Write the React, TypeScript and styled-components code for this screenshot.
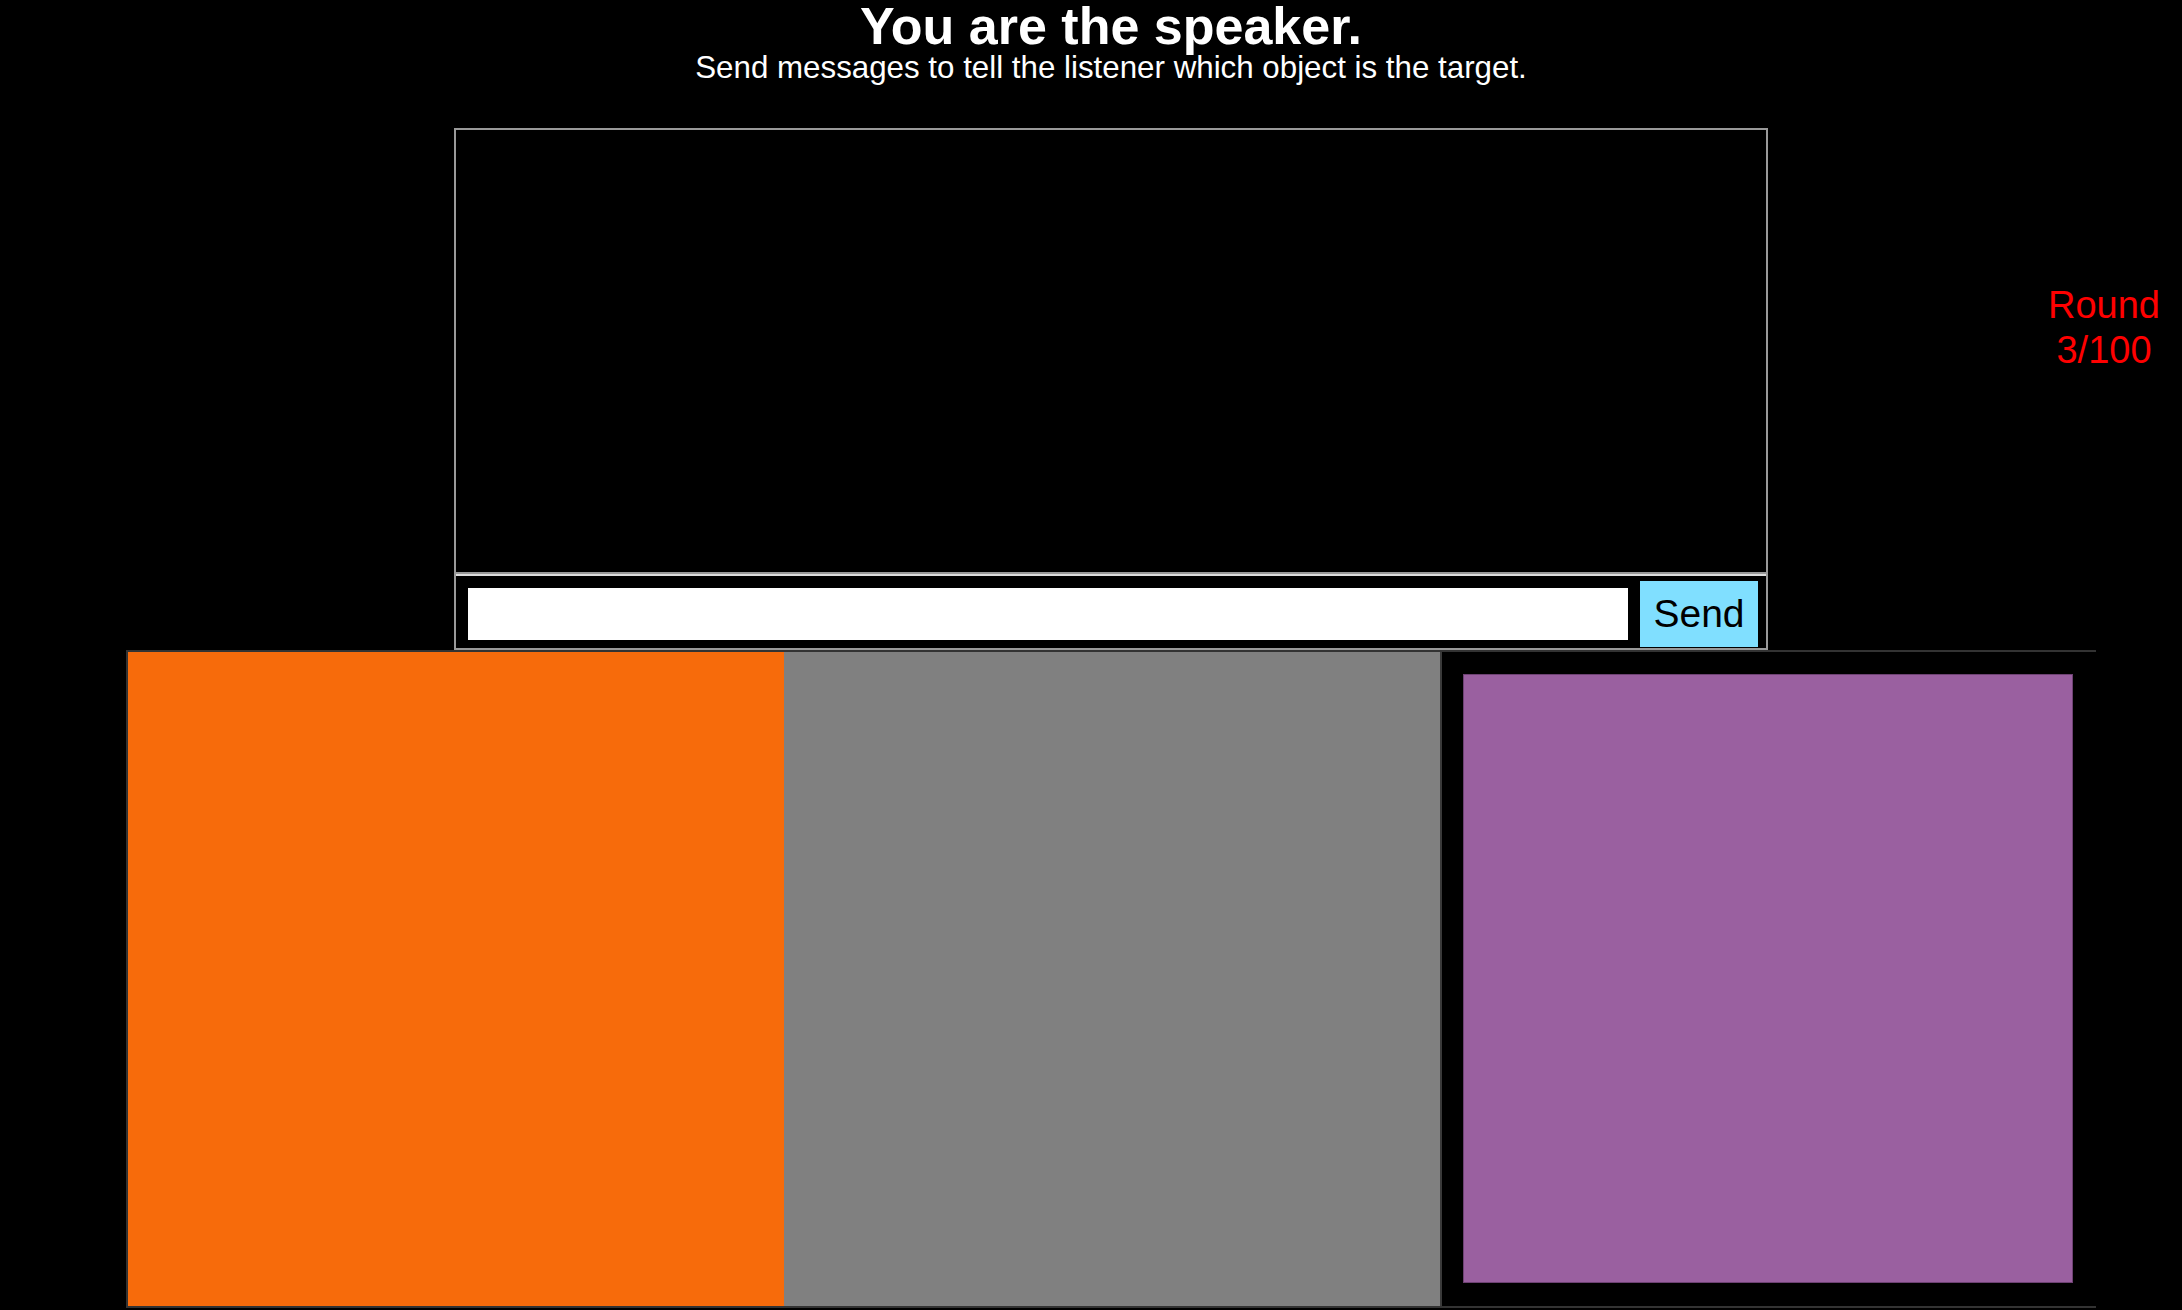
import React from 'react';
import styled, { createGlobalStyle } from 'styled-components';

const GlobalStyle = createGlobalStyle`
    html, body {
        margin: 0;
        padding: 0;
        background: #000;
        overflow: hidden;
    }
    * {
        box-sizing: border-box;
    }
`

const Page = styled.div`
    width: 2182px;
    height: 1310px;
    background: #000;
    font-family: "Liberation Sans", Arial, sans-serif;
    color: #fff;
    overflow: hidden;
`

const Header = styled.div`
    width: 1970px;
    margin-left: 126px;
    text-align: center;
`

const Title = styled.h1`
    margin: 0;
    font-size: 52px;
    line-height: 52px;
    font-weight: bold;
`

const Subtitle = styled.p`
    margin: 0;
    font-size: 31.3px;
    line-height: 31px;
`

const TopRow = styled.div`
    display: flex;
    margin-top: 45px;
`

const ChatBox = styled.div`
    margin-left: 454px;
    width: 1314px;
    border: 2px solid #999;
    display: flex;
    flex-direction: column;
`

const Messages = styled.div`
    height: 444px;
    border-bottom: 2px solid #999;
`

const InputRow = styled.div`
    display: flex;
    align-items: center;
    gap: 12px;
    height: 74px;
    padding: 6px 8px 2px 12px;
    border-top: 2px solid #ddd;
`

const TextInput = styled.input`
    flex: 1;
    height: 52px;
    border: none;
    outline: none;
    background: #fff;
    font-family: "Liberation Sans", Arial, sans-serif;
    font-size: 24px;
    padding: 0 8px;
`

const SendButton = styled.button`
    width: 118px;
    height: 66px;
    border: none;
    padding: 0;
    background: #80dfff;
    color: #000;
    font-family: "Liberation Sans", Arial, sans-serif;
    font-size: 39px;
    line-height: 66px;
    cursor: pointer;
`

const Side = styled.div`
    flex: 1;
    display: flex;
    justify-content: flex-end;
    align-items: flex-start;
    padding-top: 155px;
    padding-right: 22px;
`

const RoundInfo = styled.div`
    color: #ff0000;
    font-size: 38px;
    line-height: 45px;
    text-align: center;
`

const Board = styled.div`
    width: 1970px;
    margin-left: 126px;
    border: 2px solid #333;
    border-right: none;
    display: grid;
    grid-template-columns: repeat(3, 1fr);
`

const Cell = styled.div<{ $color: string; $target?: boolean }>`
    height: 654px;
    background: ${p => p.$target ? '#000' : p.$color};
    padding: ${p => p.$target ? '22px 23px 23px 21px' : '0'};
    border-left: ${p => p.$target ? '2px solid #3a3a3a' : 'none'};
`

const Swatch = styled.div<{ $color: string }>`
    width: 100%;
    height: 100%;
    background: ${p => p.$color};
    border: 1px solid #6e4273;
`

const objects = [
    { id: 1, color: '#f76b0b', target: false },
    { id: 2, color: '#808080', target: false },
    { id: 3, color: '#9a60a0', target: true },
];

const App = () => {
    const [message, setMessage] = React.useState('');

    return <>
        <GlobalStyle />
        <Page>
            <Header>
                <Title>You are the speaker.</Title>
                <Subtitle>Send messages to tell the listener which object is the target.</Subtitle>
            </Header>
            <TopRow>
                <ChatBox>
                    <Messages />
                    <InputRow>
                        <TextInput value={message} onChange={(e) => setMessage(e.target.value)} />
                        <SendButton onClick={() => setMessage('')}>Send</SendButton>
                    </InputRow>
                </ChatBox>
                <Side>
                    <RoundInfo>Round<br />3/100</RoundInfo>
                </Side>
            </TopRow>
            <Board>
                {objects.map((obj) =>
                    <Cell key={obj.id} $color={obj.color} $target={obj.target}>
                        {obj.target && <Swatch $color={obj.color} />}
                    </Cell>
                )}
            </Board>
        </Page>
    </>
};

export default App;
